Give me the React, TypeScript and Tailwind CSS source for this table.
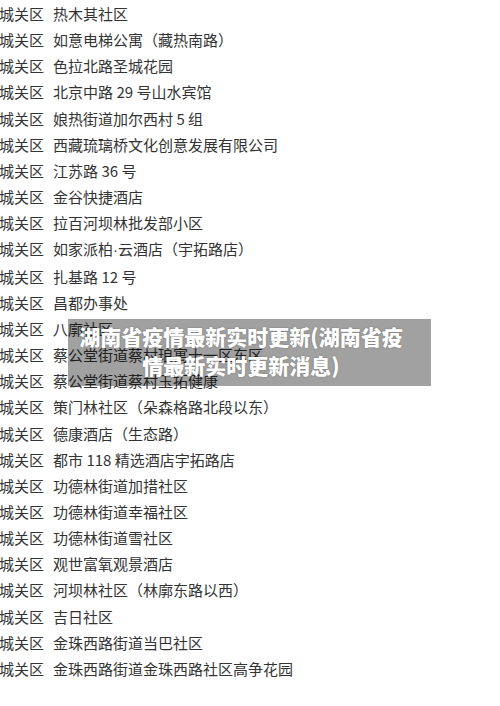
import React from "react";

const items: React.ReactNode[] = [
  "热木其社区",
  "如意电梯公寓（藏热南路）",
  "色拉北路圣城花园",
  "北京中路 29 号山水宾馆",
  "娘热街道加尔西村 5 组",
  "西藏琉璃桥文化创意发展有限公司",
  "江苏路 36 号",
  "金谷快捷酒店",
  "拉百河坝林批发部小区",
  <>
    如家派柏<span style={{ fontFamily: '"Liberation Sans", sans-serif' }}>·</span>云酒店（宇拓路店）
  </>,
  "扎基路 12 号",
  "昌都办事处",
  "八廓社区",
  "蔡公堂街道蔡村琅寓十一区东区",
  "蔡公堂街道蔡村玉拓健康",
  "策门林社区（朵森格路北段以东）",
  "德康酒店（生态路）",
  "都市 118 精选酒店宇拓路店",
  "功德林街道加措社区",
  "功德林街道幸福社区",
  "功德林街道雪社区",
  "观世富氧观景酒店",
  "河坝林社区（林廓东路以西）",
  "吉日社区",
  "金珠西路街道当巴社区",
  "金珠西路街道金珠西路社区高争花园",
];

export default function App() {
  return (
    <div
      className="relative w-[500px] h-[706px] overflow-hidden bg-white"
      style={{ fontFamily: '"Noto Sans CJK SC", "Noto Sans", sans-serif' }}
    >
      <div className="flex flex-col pt-[1px] -ml-px text-[15px] leading-[26.15px] text-[#333333]">
        {items.map((t, i) => (
          <div key={i} className="flex gap-[9px] whitespace-nowrap">
            <span>城关区</span>
            <span>{t}</span>
          </div>
        ))}
      </div>
      <div className="absolute left-[68px] top-[319px] w-[363px] h-[67px] bg-[rgba(0,0,0,0.37)] pl-[4px] pr-[21px] pt-[3px]">
        <p className="text-center text-white font-black text-[21px] leading-[29px] [text-shadow:0_0_2px_rgba(0,0,0,0.3)]">
          湖南省疫情最新实时更新(湖南省疫情最新实时更新消息)
        </p>
      </div>
    </div>
  );
}
